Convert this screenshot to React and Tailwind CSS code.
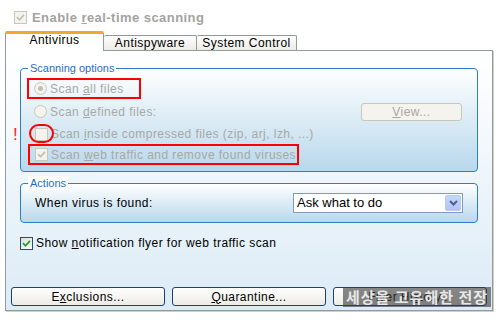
import React from 'react';

const Tick = ({ color }) => (
    <svg width="9" height="9" viewBox="0 0 9 9">
        <path d="M1 4.2 L3.5 6.8 L8 1.8" stroke={color} strokeWidth="1.8" fill="none" />
    </svg>
);

const CheckBox = ({ checked, disabled }) => (
    <span
        className={`w-[13px] h-[13px] flex items-center justify-center shrink-0 border ${disabled
            ? 'border-[#c9c7ba] bg-[#f4f3ee]'
            : 'border-[#1c5180] bg-gradient-to-br from-[#dcdcd7] to-white'}`}
    >
        {checked && <Tick color={disabled ? '#c2c0b4' : '#21a121'} />}
    </span>
);

const Radio = ({ checked }) => (
    <span className="w-[13px] h-[13px] rounded-full border border-[#cac8bb] bg-[#f4f3ee] flex items-center justify-center shrink-0">
        {checked && <span className="w-[5px] h-[5px] rounded-full bg-[#c2c0b4]" />}
    </span>
);

const Group = ({ label, className, children }) => (
    <div className={`relative rounded-[4px] border border-[#2f7ec3] bg-gradient-to-b from-white to-[#b8d8ec] ${className}`}>
        <span className="absolute -top-[8px] left-[7px] px-[2px] bg-white text-[11px] tracking-normal text-[#1e6fc9] leading-[14px]">{label}</span>
        {children}
    </div>
);

const Button = ({ children }) => (
    <button className="w-[154px] h-[19px] rounded-[3px] border border-[#1f3f6e] bg-gradient-to-b from-white to-[#ecebe6] text-black leading-[16px]">
        {children}
    </button>
);

export default function App() {
    return (
        <div className="relative w-[499px] h-[324px] bg-white overflow-hidden font-['Liberation_Sans',Arial,sans-serif] text-[12px] tracking-[0.45px]">
            {/* header checkbox */}
            <div className="flex items-center gap-[5px] pl-[14px] pt-[11px] h-[23px]">
                <CheckBox checked disabled />
                <span className="text-[13px] font-bold text-[#a3a3a0] leading-[13px]">
                    Enable <u>r</u>eal-time scanning
                </span>
            </div>

            {/* tabs */}
            <div className="flex items-end ml-[5px] mt-[8px] h-[19px]">
                <div className="relative z-10 -mb-px w-[99px] h-[20px] border-t-[3px] border-t-[#f2a82c] border-x border-[#919b9c] bg-white rounded-t-[2px] text-center leading-[12px] text-black">
                    Antivirus
                </div>
                <div className="w-[93px] h-[15px] border-t border-r border-[#919b9c] rounded-t-[2px] bg-gradient-to-b from-white to-[#ecebe6] text-center leading-[14px] text-black">
                    Antispyware
                </div>
                <div className="w-[100px] h-[15px] border-t border-r border-[#919b9c] rounded-t-[2px] bg-gradient-to-b from-white to-[#ecebe6] text-center leading-[14px] text-black">
                    System Control
                </div>
            </div>

            {/* panel */}
            <div className="relative ml-[5px] w-[488px] h-[261px] border border-[#919b9c] bg-gradient-to-b from-white to-[#dcebf6] shadow-[1px_1px_0_#d0d0c6] flex flex-col">
                <span className="absolute left-[7px] top-[75px] text-[17px] leading-[17px] text-[#ff1a1a]">!</span>

                <Group label="Scanning options" className="mt-[17px] mx-[14px] h-[104px] text-[#a8a8a4]">
                    <div className="ml-[6px] mt-[9px] w-[114px] h-[21px] border-2 border-[#f00] flex items-center gap-[3px] pl-[5px]">
                        <Radio checked />
                        <span>Scan <u>a</u>ll files</span>
                    </div>
                    <div className="flex items-center h-[25px] pl-[13px] pr-[15px]">
                        <Radio />
                        <span className="ml-[3px]">Scan <u>d</u>efined files:</span>
                        <span className="ml-auto w-[101px] h-[18px] rounded-[3px] border border-[#c9c7ba] bg-[#f4f3ee] text-center leading-[16px] text-[#a8a8a4]">
                            <u>V</u>iew...
                        </span>
                    </div>
                    <div className="flex items-center h-[20px] pl-[14px] gap-[3px]">
                        <CheckBox disabled />
                        <span>Scan <u>i</u>nside compressed files (zip, arj, lzh, ...)</span>
                    </div>
                    <div className="ml-[7px] w-[271px] h-[21px] border-2 border-[#f00] flex items-center gap-[3px] pl-[5px]">
                        <CheckBox checked disabled />
                        <span>Scan <u>w</u>eb traffic and remove found viruses</span>
                    </div>
                    <span className="absolute left-[8px] top-[55px] w-[25px] h-[19px] rounded-full border-2 border-[#f00]" />
                </Group>

                <Group label="Actions" className="mt-[11px] mx-[14px] h-[40px] flex items-center justify-between pl-[14px] pr-[14px] text-black">
                    <span>When virus is found:</span>
                    <div className="w-[170px] h-[20px] border border-[#7f9db9] bg-white flex items-center pl-[3px] pr-[1px]">
                        <span className="text-[13px] tracking-normal">Ask what to do</span>
                        <span className="ml-auto w-[16px] h-[16px] rounded-[2px] bg-gradient-to-b from-[#c6d6fc] to-[#b0c4f4] border border-[#b9cbf3] flex items-center justify-center">
                            <svg width="9" height="6" viewBox="0 0 9 6">
                                <path d="M1 1 L4.5 4.5 L8 1" stroke="#4d6185" strokeWidth="2" fill="none" />
                            </svg>
                        </span>
                    </div>
                </Group>

                <div className="flex items-center gap-[3px] ml-[14px] mt-[12px] h-[16px] text-black">
                    <CheckBox checked />
                    <span>Show <u>n</u>otification flyer for web traffic scan</span>
                </div>

                <div className="flex gap-[7px] ml-[5px] mt-[36px]">
                    <Button>E<u>x</u>clusions...</Button>
                    <Button><u>Q</u>uarantine...</Button>
                    <Button>Flyer Hi<u>s</u>tory...</Button>
                </div>
            </div>

            {/* watermark */}
            <div className="absolute left-[343px] top-[287px] w-[148px] h-[20px] bg-[rgba(60,60,60,0.62)] flex items-center justify-center font-['Noto_Sans_CJK_KR',sans-serif] text-[15px] font-bold text-[#e8e8e8] tracking-[1px] leading-[20px]">
                세상을 고유해한 전장
            </div>
        </div>
    );
}
